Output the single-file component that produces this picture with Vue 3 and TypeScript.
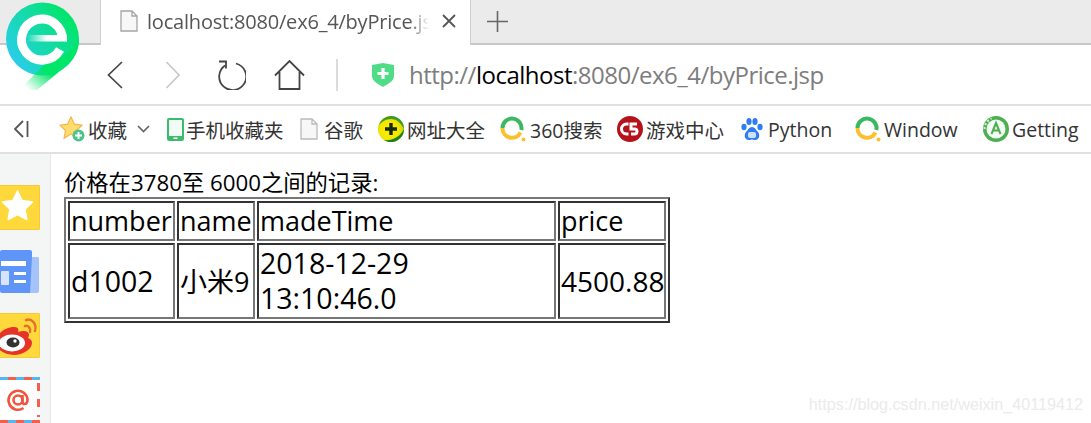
<script setup lang="ts">
const rows: string[][] = [["d1002", "小米9", "2018-12-29\n13:10:46.0", "4500.88"]];
const heads: string[] = ["number", "name", "madeTime", "price"];
</script>

<template>
  <div class="page">
    <svg class="logo" width="100" height="100" viewBox="0 0 100 100">
      <defs>
        <linearGradient id="lg" gradientUnits="userSpaceOnUse" x1="14" y1="68" x2="76" y2="24">
          <stop offset="0" stop-color="#30c9f2" />
          <stop offset="0.22" stop-color="#1fd4cf" />
          <stop offset="0.6" stop-color="#12dca0" />
          <stop offset="1" stop-color="#00e668" />
        </linearGradient>
        <linearGradient id="tail" gradientUnits="userSpaceOnUse" x1="56" y1="62" x2="30" y2="91">
          <stop offset="0" stop-color="#00e668" />
          <stop offset="0.3" stop-color="#00e668" />
          <stop offset="1" stop-color="#00e668" stop-opacity="0" />
        </linearGradient>
        <linearGradient id="bar" x1="0" y1="0" x2="1" y2="0">
          <stop offset="0" stop-color="#fff" stop-opacity="0" />
          <stop offset="0.5" stop-color="#fff" />
          <stop offset="1" stop-color="#fff" />
        </linearGradient>
      </defs>
      <circle cx="42.500" cy="39" r="36.500" fill="url(#lg)" />
      <path d="M79 39c0 12-5 20-13 27L37 90H19l27-27c-1 0 2-2 5-3 12-2 20-10 28-21z" fill="url(#tail)" />
      <path d="M62.500 41A20.500 20.500 0 1 0 60 49.500" fill="none" stroke="#fff" stroke-width="9" />
      <rect x="27" y="35" width="40" height="6.500" fill="url(#bar)" />
    </svg>

    <header class="tabs">
      <div class="tabs-left"></div>
      <div class="tab">
        <svg class="ico-doc" width="18" height="22" viewBox="0 0 18 22">
          <path d="M1 1h11l5 5v15H1z M12 1v5h5" fill="#f7f7f7" stroke="#a5a5a5" stroke-width="1.300" />
        </svg>
        <span class="tab-title">localhost:8080/ex6_4/byPrice.jsp</span>
        <svg class="tab-close" width="14" height="14" viewBox="0 0 14 14">
          <path d="M1 1l12 12M13 1L1 13" stroke="#555" stroke-width="1.800" />
        </svg>
      </div>
      <svg class="tab-new" width="21" height="21" viewBox="0 0 21 21">
        <path d="M10.500 0v21M0 10.500h21" stroke="#666" stroke-width="1.600" />
      </svg>
    </header>

    <nav class="addr">
      <svg class="nav-back" width="16" height="28" viewBox="0 0 16 28">
        <path d="M15 1L1.500 14 15 27" fill="none" stroke="#444" stroke-width="1.700" />
      </svg>
      <svg class="nav-fwd" width="16" height="28" viewBox="0 0 16 28">
        <path d="M1.500 1L14 14 1.500 27" fill="none" stroke="#c8c8c8" stroke-width="1.700" />
      </svg>
      <svg class="nav-reload" width="30" height="30" viewBox="0 0 30 30">
        <path d="M9 5.500A13.500 13.500 0 1 0 20 3.500" fill="none" stroke="#444" stroke-width="1.800" />
        <path d="M3 1.500h7v7" fill="none" stroke="#444" stroke-width="1.800" />
      </svg>
      <svg class="nav-home" width="31" height="30" viewBox="0 0 31 30">
        <path d="M1 15.500L15.500 1 30 15.500M5.500 12v17h20V12" fill="none" stroke="#444" stroke-width="1.800" />
      </svg>
      <div class="addr-sep"></div>
      <svg class="shield" width="22" height="24" viewBox="0 0 22 24">
        <path d="M0 2l11-2 11 2v11c0 5-6 8-11 11C6 21 0 18 0 13z" fill="#4fdc87" />
        <path d="M11 5v11M5.500 10.500h11" stroke="#fff" stroke-width="3.200" />
      </svg>
      <div class="url">http://<b class="host">localhost</b>:8080/ex6_4/byPrice.jsp</div>
    </nav>

    <div class="marks">
      <svg class="collapse" width="16" height="18" viewBox="0 0 16 18">
        <path d="M10 1L2 9l8 8" fill="none" stroke="#555" stroke-width="1.800" />
        <path d="M14.500 1v16" stroke="#555" stroke-width="1.800" />
      </svg>
      <div class="mk w1">
        <svg width="26" height="26" viewBox="0 0 26 26">
          <path d="M12 1l3.400 7.200 7.600 1-5.500 5.300 1.400 7.700L12 18l-6.900 4.200 1.400-7.700L1 9.200l7.600-1z" fill="#ffdc6e" stroke="#f5b54a" stroke-width="1.200" />
          <circle cx="19.500" cy="19.500" r="6" fill="#4cc38a" />
          <path d="M19.500 16v7M16 19.500h7" stroke="#fff" stroke-width="2" />
        </svg>
        <span class="t t1">收藏</span>
        <svg class="chev" width="13" height="8" viewBox="0 0 13 8">
          <path d="M1 1l5.500 5.500L12 1" fill="none" stroke="#666" stroke-width="1.700" />
        </svg>
      </div>
      <div class="mk w2">
        <svg width="17" height="23" viewBox="0 0 17 23">
          <rect x="1" y="1" width="15" height="21" rx="1" fill="#f2fcf7" stroke="#3cbb6c" stroke-width="2" />
          <rect x="1" y="18" width="15" height="4" fill="#3cbb6c" />
          <rect x="6.500" y="19.500" width="4" height="1.500" fill="#fff" />
        </svg>
        <span class="t t2">手机收藏夹</span>
      </div>
      <div class="mk w3">
        <svg width="18" height="22" viewBox="0 0 18 22">
          <path d="M1 1h11l5 5v15H1z M12 1v5h5" fill="#f7f7f7" stroke="#bbb" stroke-width="1.300" />
        </svg>
        <span class="t t3">谷歌</span>
      </div>
      <div class="mk w4">
        <svg width="26" height="26" viewBox="0 0 26 26">
          <defs>
            <radialGradient id="globe" cx="0.450" cy="0.550" r="0.550">
              <stop offset="0" stop-color="#ffee00" />
              <stop offset="0.7" stop-color="#f2e600" />
              <stop offset="1" stop-color="#b8cf10" />
            </radialGradient>
          </defs>
          <circle cx="13" cy="13" r="13" fill="url(#globe)" />
          <path d="M13 0a13 13 0 0 1 13 13c-3-6-7-10-13-10S4 6 1 9A13 13 0 0 1 13 0z" fill="#3b9a2d" />
          <path d="M26 13a13 13 0 0 1-20 11c8 1 16-3 20-11z" fill="#1d7f20" />
          <path d="M13 7v12M7 13h12" stroke="#142a08" stroke-width="3.400" />
        </svg>
        <span class="t t4">网址大全</span>
      </div>
      <div class="mk w5">
        <svg width="26" height="26" viewBox="0 0 26 26">
          <path d="M2.500 12A9.500 9.500 0 1 1 21.300 14" fill="none" stroke="#3bb960" stroke-width="4" />
          <path d="M2.500 12A9.500 9.500 0 0 0 20.500 16.500" fill="none" stroke="#fcc02e" stroke-width="4" />
          <circle cx="23.500" cy="23.500" r="2" fill="#fcc02e" />
        </svg>
        <span class="t t5">360搜索</span>
      </div>
      <div class="mk w6">
        <svg width="26" height="26" viewBox="0 0 26 26">
          <circle cx="13" cy="13" r="13" fill="#b5121b" />
          <path d="M11.500 8H9.500a5 5 0 0 0 0 10h2" fill="none" stroke="#fff" stroke-width="3" />
          <path d="M20 8h-6v5h3.500a2.500 2.500 0 0 1 0 5H14" fill="none" stroke="#fff" stroke-width="3" />
        </svg>
        <span class="t t6">游戏中心</span>
      </div>
      <div class="mk w7">
        <svg width="22" height="24" viewBox="0 0 22 24">
          <ellipse cx="3" cy="10" rx="2.600" ry="3.200" fill="#2f7df0" />
          <ellipse cx="8" cy="4.500" rx="2.600" ry="3.500" fill="#2f7df0" />
          <ellipse cx="14" cy="4.500" rx="2.600" ry="3.500" fill="#2f7df0" />
          <ellipse cx="19" cy="10" rx="2.600" ry="3.200" fill="#2f7df0" />
          <path d="M11 10c-3 0-4 3-6 5s-2 8 3 8c2 0 2-.6 3-.6s1 .6 3 .6c5 0 5-6 3-8s-3-5-6-5z" fill="#2f7df0" />
          <rect x="7" y="15" width="8" height="6" rx="2" fill="#cfe2fd" />
        </svg>
        <span class="t t7">Python</span>
      </div>
      <div class="mk w8">
        <svg width="26" height="26" viewBox="0 0 26 26">
          <path d="M2.500 12A9.500 9.500 0 1 1 21.300 14" fill="none" stroke="#3bb960" stroke-width="4" />
          <path d="M2.500 12A9.500 9.500 0 0 0 20.500 16.500" fill="none" stroke="#fcc02e" stroke-width="4" />
          <circle cx="23.500" cy="23.500" r="2" fill="#fcc02e" />
        </svg>
        <span class="t t8">Window</span>
      </div>
      <div class="mk w9">
        <svg width="26" height="26" viewBox="0 0 26 26">
          <circle cx="13" cy="13" r="13" fill="#4caf50" />
          <circle cx="13" cy="13" r="9.500" fill="#f4faf4" />
          <path d="M1.500 13a11.500 11.500 0 0 1 7-10.500" fill="none" stroke="#d6efd6" stroke-width="2" stroke-dasharray="2 2" />
          <path d="M8.500 18L13 7l4.500 11M10 14.500h6" fill="none" stroke="#4caf50" stroke-width="2" />
        </svg>
        <span class="t t9">Getting</span>
      </div>
    </div>

    <div class="body">
      <aside class="side">
        <div class="tile star">
          <svg width="40" height="45" viewBox="0 0 40 45">
            <path d="M17.500 6l4.600 9.400 10.400 1.500-7.500 7.300 1.800 10.300-9.300-4.900-9.300 4.900 1.800-10.300-7.500-7.300 10.400-1.500z" fill="#fff" stroke="#fff" stroke-linejoin="round" stroke-width="1.500" />
          </svg>
        </div>
        <div class="tile news">
          <svg width="40" height="43" viewBox="0 0 40 43">
            <rect x="0" y="0" width="32" height="43" rx="2" fill="#5f94f8" />
            <path d="M32 7h6a1 1 0 0 1 1 1v33a2 2 0 0 1-2 2H30z" fill="#a4c3fb" />
            <rect x="1" y="11" width="25" height="5" fill="#fff" />
            <rect x="1" y="21" width="8" height="14" rx="1" fill="#d7e4fe" />
            <rect x="14" y="22" width="12" height="3" fill="#fff" />
            <rect x="14" y="30" width="12" height="3" fill="#fff" />
          </svg>
        </div>
        <div class="tile weibo">
          <svg width="40" height="45" viewBox="0 0 40 45">
            <path d="M-5 29c0-6 9-15 19-15 4 0 5 2 4 5 6-2 11-1 11 3 0 1-.5 2-1 3 2 1 4 2 4 5 0 6-9 12-18 12S-5 36-5 29z" fill="#e6332a" />
            <ellipse cx="12" cy="30" rx="13" ry="8.500" fill="#fff" />
            <ellipse cx="13" cy="29.500" rx="6.500" ry="5" fill="#333" />
            <circle cx="15" cy="28" r="1.700" fill="#fff" />
            <path d="M25 13c3-1 6 2 5 6M26 7c6-2 11 4 9 11" fill="none" stroke="#e8702a" stroke-width="2.400" stroke-linecap="round" />
          </svg>
        </div>
        <div class="tile mail">
          <svg width="40" height="46" viewBox="0 0 40 46">
            <rect x="0" y="1" width="40" height="45" fill="#fff" />
            <path d="M0 1.500h40" stroke="#58b5f0" stroke-width="3" stroke-dasharray="8 8" />
            <path d="M8 1.500h32" stroke="#f2604c" stroke-width="3" stroke-dasharray="8 8" />
            <path d="M0 44.500h40" stroke="#f2604c" stroke-width="3" stroke-dasharray="8 8" />
            <path d="M8 44.500h32" stroke="#58b5f0" stroke-width="3" stroke-dasharray="8 8" />
            <path d="M38.500 6v34" stroke="#f2604c" stroke-width="3" stroke-dasharray="8 8" />
            <circle cx="18" cy="23" r="4.500" fill="none" stroke="#f2553e" stroke-width="2.600" />
            <path d="M22.500 18v7c0 3 5 3 5-2a9.500 9.500 0 1 0-4 8" fill="none" stroke="#f2553e" stroke-width="2.600" />
          </svg>
        </div>
      </aside>

      <main class="content">
        <div class="caption">价格在3780至 6000之间的记录:</div>
        <table class="grid" border="1">
          <tbody>
            <tr class="head">
              <td v-for="h in heads" :key="h">{{ h }}</td>
            </tr>
            <tr v-for="(r, i) in rows" :key="i" class="row">
              <td v-for="c in r" :key="c">{{ c }}</td>
            </tr>
          </tbody>
        </table>
      </main>
    </div>

    <div class="watermark">https://blog.csdn.net/weixin_40119412</div>
  </div>
</template>

<style>
html, body { margin: 0; padding: 0; background: #fff; overflow: hidden; }
</style>

<style scoped>
.page {
  position: relative;
  width: 1091px;
  height: 423px;
  overflow: hidden;
  display: flex;
  flex-direction: column;
  font-family: "Open Sans", "Noto Sans CJK SC", sans-serif;
  color: #000;
  background: #fff;
}
.logo { position: absolute; left: 0; top: 0; z-index: 2; }

.tabs {
  height: 45px;
  flex: none;
  display: flex;
  align-items: stretch;
  background: #ebebeb;
  box-shadow: inset 0 -2px 0 #c8c8c8;
}
.tabs-left { width: 100px; border-right: 1px solid #cfcfcf; }
.tab {
  width: 370px;
  background: #fff;
  border-right: 1px solid #cfcfcf;
  display: flex;
  align-items: center;
  padding-left: 19px;
  box-sizing: border-box;
  padding-bottom: 3px;
}
.ico-doc { flex: none; }
.tab-title {
  margin-left: 9px;
  width: 282px;
  flex: none;
  font-size: 20px;
  letter-spacing: -0.200px;
  color: #555;
  white-space: nowrap;
  overflow: hidden;
  -webkit-mask-image: linear-gradient(90deg, #000 93%, transparent);
  mask-image: linear-gradient(90deg, #000 93%, transparent);
}
.tab-close { margin-left: 13px; flex: none; }
.tab-new { margin-left: 16px; align-self: center; margin-bottom: 3px; }

.addr {
  height: 59px;
  flex: none;
  display: flex;
  align-items: center;
  border-bottom: 2px solid #e0e0e0;
}
.nav-back { margin-left: 107px; }
.nav-fwd { margin-left: 42px; }
.nav-reload { margin-left: 35px; }
.nav-home { margin-left: 28px; }
.addr-sep { width: 2px; height: 32px; background: #dcdcdc; margin-left: 31px; }
.shield { margin-left: 34px; }
.url { margin-left: 15px; font-size: 24px; letter-spacing: -0.500px; color: #7d7d7d; white-space: nowrap; }
.host { font-weight: 400; color: #000; }

.marks {
  height: 46px;
  flex: none;
  display: flex;
  align-items: center;
  border-bottom: 2px solid #e0e0e0;
}
.collapse { margin-left: 13px; margin-right: 30px; flex: none; }
.mk { display: flex; align-items: center; flex: none; }
.mk svg { flex: none; }
.t { font-size: 19.500px; color: #333; white-space: nowrap; margin-left: 3px; }
.t2 { margin-left: 2px; }
.t3 { margin-left: 6px; }
.t5 { margin-left: 4px; }
.t7 { margin-left: 5px; }
.chev { margin-left: 10px; }
.w1 { width: 108px; }
.w2 { width: 133px; }
.w3 { width: 78px; }
.w4 { width: 122px; }
.w5 { width: 117px; }
.w6 { width: 124px; }
.w7 { width: 114px; }
.w8 { width: 128px; }
.w9 { width: 108px; }

.body { flex: 1; display: flex; min-height: 0; }
.side {
  width: 50px;
  flex: none;
  background: #f4f6f6;
  border-right: 1px solid #e6e6e6;
  overflow: hidden;
  padding-top: 31px;
}
.tile { width: 40px; display: block; overflow: hidden; }
.tile svg { display: block; overflow: hidden; }
.star, .weibo {
  height: 45px;
  background: #ffd93c;
  border-radius: 0 2px 2px 0;
  box-shadow: inset -1px 0 0 #f7c93a, inset 0 1px 0 #f7c93a, inset 0 -1px 0 #f7c93a;
}
.news { height: 43px; margin-top: 20px; }
.weibo { margin-top: 20px; }
.mail { height: 46px; margin-top: 19px; }

.content { flex: 1; padding-top: 14px; padding-left: 13px; }
.caption { font-size: 22.300px; line-height: 30px; white-space: nowrap; }
.grid {
  border-collapse: separate;
  border-spacing: 2px;
  border: 2px solid;
  border-color: #777 #333 #333 #777;
  font-size: 27px;
  margin-top: -1px;
  table-layout: fixed;
  width: 606px;
}
.grid td {
  border: 2px solid;
  border-color: #333 #777 #777 #333;
  padding: 1px;
  vertical-align: middle;
  white-space: pre-line;
  overflow: visible;
}
.head td { line-height: 34px; }
.row td { line-height: 35px; font-size: 28.500px; }
.row td:nth-child(2) { font-size: 27px; }
.row td:nth-child(4) { font-size: 28px; }
.grid td:nth-child(1) { width: 101px; }
.grid td:nth-child(2) { width: 72px; }
.grid td:nth-child(3) { width: 293px; }
.grid td:nth-child(4) { width: 102px; }

.watermark {
  position: absolute;
  right: 8px;
  bottom: 9px;
  font-family: "Liberation Sans", sans-serif;
  font-size: 16.200px;
  color: #ebebeb;
}
</style>
